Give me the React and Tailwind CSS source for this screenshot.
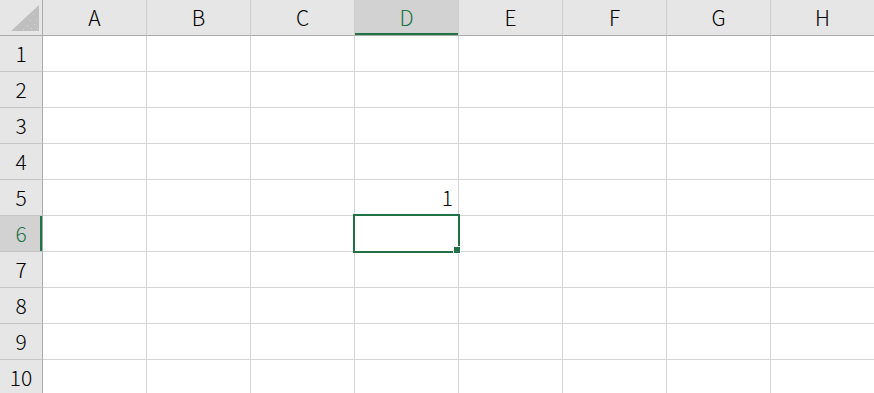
import React from "react";

const COLS = ["A", "B", "C", "D", "E", "F", "G", "H"];
const ROWS = [1, 2, 3, 4, 5, 6, 7, 8, 9, 10];
const SEL_COL = "D";
const SEL_ROW = 6;

// cell values keyed by address
const values = { D5: "1" };

function Corner() {
  return (
    <div className="border-r border-b border-r-[#ababab] border-b-[#ababab] bg-[#e6e6e6]">
      <svg width="42" height="35" viewBox="0 0 42 35">
        <polygon points="39,5 39,31 11,31" fill="#bfbfbf" />
        {[
          [33, 14], [36, 19], [30, 20], [34, 24], [27, 25], [31, 28], [23, 29], [37, 28],
        ].map(([x, y], i) => (
          <rect key={i} x={x} y={y} width="1" height="1" fill="#d6d6d6" />
        ))}
      </svg>
    </div>
  );
}

function ColHeader({ label }) {
  const active = label === SEL_COL;
  return (
    <div
      className={`flex items-center justify-center border-r border-b border-r-[#cdcdcd] border-b-[#ababab] text-[21px] ${
        active
          ? "bg-[#d2d2d2] text-[#217346] shadow-[inset_0_-2px_0_#217346]"
          : "bg-[#e6e6e6] text-black"
      }`}
    >
      {label}
    </div>
  );
}

function RowHeader({ n }) {
  const active = n === SEL_ROW;
  return (
    <div
      className={`flex items-center justify-center border-r border-b border-r-[#ababab] border-b-[#c4c4c4] text-[21px] ${
        active
          ? "bg-[#d2d2d2] text-[#217346] shadow-[inset_-2px_0_0_#217346]"
          : "bg-[#e6e6e6] text-black"
      }`}
    >
      {n}
    </div>
  );
}

function Cell({ addr }) {
  return (
    <div className="flex items-end justify-end border-r border-b border-[#d4d4d4] bg-white pr-[5px] pb-[7px] text-[21px] leading-none text-black">
      {values[addr]}
    </div>
  );
}

export default function App() {
  const selLeft = 43 + COLS.indexOf(SEL_COL) * 104 - 2;
  const selTop = 36 + (SEL_ROW - 1) * 36 - 2;

  return (
    <div
      className="relative h-[393px] w-[874px] overflow-hidden bg-white font-light"
      style={{ fontFamily: '"Noto Sans CJK JP", "Noto Sans", sans-serif' }}
    >
      <div className="grid grid-cols-[43px_repeat(8,104px)] grid-rows-[repeat(11,36px)]">
        <Corner />
        {COLS.map((c) => (
          <ColHeader key={c} label={c} />
        ))}
        {ROWS.map((r) => (
          <React.Fragment key={r}>
            <RowHeader n={r} />
            {COLS.map((c) => (
              <Cell key={c + r} addr={c + r} />
            ))}
          </React.Fragment>
        ))}
      </div>

      {/* active cell outline + fill handle */}
      <div
        className="pointer-events-none absolute h-[39px] w-[107px] border-2 border-[#217346]"
        style={{ left: selLeft, top: selTop }}
      >
        <div className="absolute -right-[3px] -bottom-[3px] h-[8px] w-[8px] border border-white bg-[#217346]" />
      </div>
    </div>
  );
}
